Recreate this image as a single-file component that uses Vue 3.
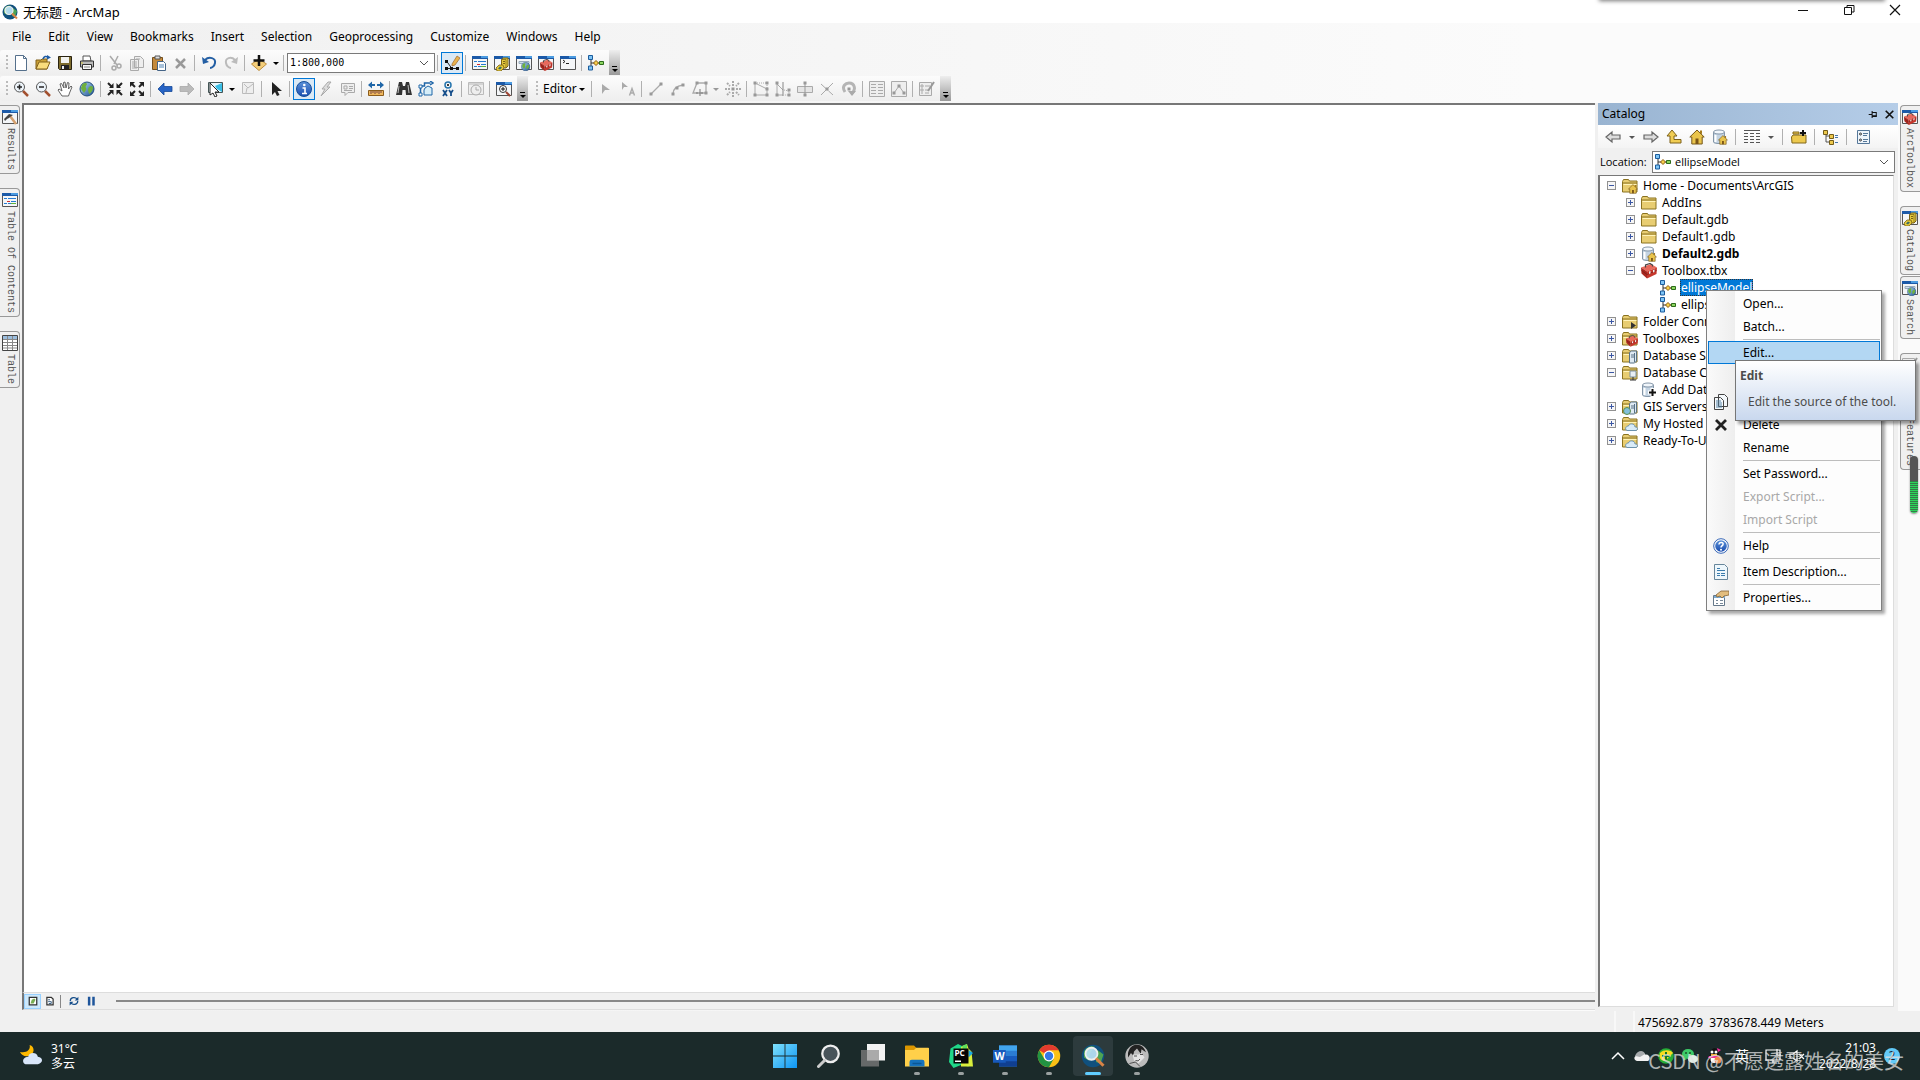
<script setup>
import { h, ref } from 'vue';

const win = '<path d="M.5 1.500h15v13H.5z" fill="#f4f6f8" stroke="#555"/><path d="M0 1h16v3H0z" fill="#1c5aa8"/><path d="M9 1h7v2H9z" fill="#4b9be0"/>';
const folder = '<path d="M.5 3.500l1-2h5l1 1.500h7.500v11H.5z" fill="#e8cd72" stroke="#8a7220"/><path d="M1 5h14" stroke="#8a7220"/><path d="M1.500 6.500h13" stroke="#fff3b8"/>';
const model = '<path d="M3 4v8M3 8h10" stroke="#333"/><path d="M.5.5h4v4h-4zM.5 11h4v4h-4z" fill="#7ec4f5" stroke="#1c5c9c"/><path d="M8 5.500l2.500 2.500L8 10.500 5.500 8z" fill="#f7cf4a" stroke="#8a5a10"/><path d="M11.500 6.500h4v3h-4z" fill="#8cd660" stroke="#2c6b1b"/>';
const toolbox = '<path d="M0 4.500L10 1l6 3.500-10 4z" fill="#e8695b"/><path d="M0 4.500l6 4v7l-5.500-5z" fill="#a8271f"/><path d="M6 8.500l10-4-.5 6.500L6 15.500z" fill="#c5362b"/><path d="M.5 7.500l5.500 4 9.500-4" fill="none" stroke="#7a1d16" stroke-width=".8"/><path d="M4.500 4.500V2L9 .5 11.500 2v1.500" fill="none" stroke="#444" stroke-width="1.200"/><path d="M8 8.500l1.500-.5v2.500L8 11zM12 7l1.500-.5V9l-1.500.5z" fill="#eee"/>';
const miniToolbox = '<g transform="translate(4 4) scale(.75)">' + toolbox + '</g>';
const house = '<path d="M8 1L.8 8h2v7h10.400V8h2z" fill="#e9c44c" stroke="#76581a"/><path d="M11 1.500h2v4l-2-2z" fill="#a57b1c"/><path d="M6.500 9.500h3V15h-3z" fill="#7a5517"/>';
const miniHouse = '<g transform="translate(6 6) scale(.62)">' + house + '</g>';
const db = '<path d="M1.500 3v10c0 2 11 2 11 0V3" fill="#c3d3e2" stroke="#8496a8"/><ellipse cx="7" cy="3" rx="5.500" ry="2" fill="#f1f6fb" stroke="#8496a8"/><path d="M3.500 6v7" stroke="#fff" stroke-width="2"/>';
const globe = '<circle cx="8" cy="8" r="7" fill="url(#sea)" stroke="#24507e"/><path d="M3 4c2-3 5-2 5-1S6 5 7 7s-1 3-2 5c-1-2-3-3-3-5zM10 6c2-2 4-1 4 1s-2 5-4 6c0-2-2-4 0-7z" fill="#6fb03d"/>';
const page = '<path d="M2.500.5h8l3 3v12h-11z" fill="#fff" stroke="#55708c"/><path d="M10.500.5v3h3" fill="none" stroke="#55708c"/>';
const lens = '<path d="M10 10l5 5" stroke="#a3502f" stroke-width="2.500"/><circle cx="6.500" cy="6" r="5" fill="#edf4fa" stroke="#555"/>';
const cloud = '<path d="M5 14.500h9c3-1 1-4-1-3.500 0-4-6-4-6.500-1-3 0-4 3.500-1.500 4.500z" fill="#d8ebf8" stroke="#6c93ae"/>';
const server = '<path d="M7.500 4.500l2-1.500h5v10l-2 2h-5z" fill="#dfeaf2" stroke="#587286"/><path d="M9 7h3M9 9h3M12.500 5v9" stroke="#587286"/>';
const caret = '<path d="M1 4h6L4 7z" fill="currentColor"/>';
const node = (x, y) => `<path d="M${x - 1.5} ${y - 1.5}h3v3h-3z" fill="#999"/>`;
const arcmap = '<circle cx="8" cy="8" r="7.500" fill="#10507e"/><path d="M2 5c2-4 6-4 7-3l-3 4-1 5-3-2zM11 4l4 3-2 6-3-1z" fill="#4da453"/><circle cx="7" cy="6.500" r="4" fill="#bfe4f8" fill-opacity=".9" stroke="#eee" stroke-width="1.200"/><path d="M10 9.500l5 5" stroke="#d98346" stroke-width="2"/>';

const icons = {
  win, folder, model, toolbox, house, globe, caret, arcmap,
  fresh: page,
  open: '<path d="M1 5h5l1-1h5v10H1z" fill="#c9a036" stroke="#80601a"/><path d="M1 14l3-7h11l-3 7z" fill="#f9dc7d" stroke="#80601a"/><path d="M8 4c1-3 3-3 5-2" fill="none" stroke="#1e5ca5" stroke-width="1.500"/><path d="M12 0l4 2.500-4 2z" fill="#1e5ca5"/>',
  save: '<path d="M1.500 1.500h13v13h-12l-1-1z" fill="#7d6b2c" stroke="#292210"/><path d="M4 2h8v6H4z" fill="#f2f2ee"/><path d="M4 10h8v4H4z" fill="#222"/><path d="M5 11h2v3H5z" fill="#eee"/>',
  print: '<path d="M4 1h7l1 5H4z" fill="#fff" stroke="#555"/><path d="M1.500 6h13v6h-13z" fill="#bbb" stroke="#333"/><path d="M3.500 9.500h9v5h-9z" fill="#f7f7f7" stroke="#333"/><path d="M5 12h6" stroke="#888"/><path d="M2 8h2" stroke="#d7c83a"/>',
  cut: '<g fill="none" stroke="#aaa" stroke-width="1.500"><path d="M3 1l7 9M11 1L7 9"/><circle cx="12" cy="11" r="2"/><circle cx="7" cy="13" r="2"/></g>',
  copyOff: '<path d="M5.500 1.500h6l3 3v8h-9zM1.500 4.500h8v11h-8z" fill="#eee" stroke="#aaa"/><path d="M3 7h5M3 9h5M3 11h5M3 13h5M7 4h4" stroke="#aaa"/>',
  copy: '<path d="M5.500.5h6l3 3v9h-9zM1.500 3.500h6l3 3v9h-9z" fill="#f4f8fb" stroke="#444"/><path d="M3 7h5M3 9h6M3 11h6M3 13h6" stroke="#5987ab"/>',
  paste: '<path d="M1.500 2.500h10v12h-10z" fill="#c58a3b" stroke="#75501d"/><path d="M4 1h5v3H4z" fill="#ddd" stroke="#555"/><path d="M6.500 6.500h6l2 2v7h-8z" fill="#fff" stroke="#446487"/><path d="M8 10h5M8 12h5" stroke="#4e83b5"/>',
  xOff: '<path d="M3 4l9 9M12 4l-9 9" stroke="#999" stroke-width="2.500"/>',
  x: '<path d="M3 3l10 10M13 3L3 13" stroke="#222" stroke-width="2.800"/>',
  undo: '<path d="M4 5c4-4 11-2 10 3-.5 3-3 5-5 5" fill="none" stroke="#245fa4" stroke-width="2"/><path d="M1 2l1 7 6-2z" fill="#245fa4"/>',
  redo: '<path d="M12 5C8 1 2 3 3 8c.5 3 3 5 5 5" fill="none" stroke="#bbb" stroke-width="2"/><path d="M15 2l-1 7-6-2z" fill="#bbb"/>',
  add: '<path d="M8 4l7.500 5L8 15.500.5 9z" fill="#f4ce7a" stroke="#bd8e3e"/><path d="M8 0v11M2.500 5.500h11" stroke="#111" stroke-width="2.500"/>',
  sketch: '<path d="M2.500 6l5 7M2 13.500h12" stroke="#222" fill="none"/><path d="M1 5h3v3H1zM1 12h3v3H1zM6 12h3v3H6zM12 12h3v3h-3z" fill="#111"/><path d="M8 9l5-8 3 2-5 7-3 1z" fill="#e9b34f" stroke="#9b6732" stroke-width=".7"/>',
  toc: win + '<path d="M2 6.500h3M2 11.500h3" stroke="#267bd1"/><path d="M6 6.500h8M6 11.500h3M9 9.500h5" stroke="#267bd1"/><path d="M5 9.500h3" stroke="#d32d2d"/><path d="M9 11.500h5" stroke="#5fb33b"/>',
  catalog: win + '<path d="M7.500 4.500l2-1.500h4.500v8l-2 2H7.500z" fill="#e4c93c" stroke="#796214"/><path d="M7.500 4.500h4.500V13" fill="none" stroke="#796214" stroke-width=".7"/><path d="M9 6.500h2M9 8.500h2" stroke="#796214"/><path d="M2 13l3-3h4l1 3-3 3H3z" fill="#e4c93c" stroke="#796214" stroke-width=".8"/><path d="M4 13.500l2-2 2 1-2 2z" fill="#3a6b62"/>',
  search: win + '<path d="M3 6.500h10v2H3z" fill="#cfe1ee" stroke="#9ab"/><g transform="translate(5 7) scale(.58)">' + globe + '</g>',
  tbox: win + '<g transform="translate(2 4) scale(.78)">' + toolbox + '</g>',
  python: win + '<path d="M3 5l2 1.500L3 8M6 8.500h3" fill="none" stroke="#222"/>',
  zoomIn: lens + '<path d="M4 6h5M6.500 3.500v5" stroke="#222" stroke-width="1.500"/>',
  zoomOut: lens + '<path d="M4 6h5" stroke="#222" stroke-width="1.500"/>',
  pan: '<path d="M5 15l-4-6 1-1 3 2-2-7 1.500-.5L7 7 6.500 1.500 8 1l1 6 1.500-5.500 1.500.5-.5 6L14 5l1 1-2.500 6-1 3z" fill="#fff" stroke="#555" stroke-width=".9"/>',
  fixedIn: '<path d="M1 2l4 4M15 2l-4 4M1 14l4-4M15 14l-4-4" stroke="#222" stroke-width="2"/><path d="M6.500 2v5H2zM9.500 2v5H14zM6.500 14V9H2zM9.500 14V9H14z" fill="#222"/>',
  fixedOut: '<path d="M3 3l3 3M13 3l-3 3M3 13l3-3M13 13l-3-3" stroke="#222" stroke-width="2"/><path d="M1 1h5L1 6zM15 1h-5l5 5zM1 15h5l-5-5zM15 15h-5l5-5z" fill="#222"/>',
  back: '<path d="M1 8l6-6v3.500h8v5H7V14z" fill="#2764c5" stroke="#174a98" stroke-width=".8"/>',
  forward: '<path d="M15 8L9 2v3.500H1v5h8V14z" fill="#bbb" stroke="#aaa" stroke-width=".8"/>',
  select: '<path d="M1.500 1.500h14v10h-14z" fill="#e8f7fc" stroke="#455"/><path d="M8 5l7-3v9l-5-3z" fill="#38bde5"/><path d="M3 2v12l3-2 2 4 2-1-2-4h4z" fill="#fff" stroke="#222"/>',
  clear: '<path d="M2.500 1.500h11v11h-11z" fill="#eee" stroke="#bbb"/><path d="M4 3l4 4 5-4M7 7l-1 5" fill="none" stroke="#bbb"/>',
  pointer: '<path d="M4 1v13l3-3 2 4 2.500-1-2-4H14z" fill="#222"/>',
  info: '<circle cx="8" cy="8" r="7.500" fill="url(#blue)" stroke="#174f9a"/><path d="M6.500 7H9v5M6 12.500h5" stroke="#fff" stroke-width="1.600" fill="none"/><circle cx="8.300" cy="4" r="1.300" fill="#fff"/>',
  bolt: '<path d="M10 1L4 8h3l-4 7 9-9H9l4-5z" fill="#ddd" stroke="#aaa"/>',
  popup: '<path d="M1.500 2.500h13v9H8l-3 3v-3H1.500z" fill="#eee" stroke="#aaa"/><path d="M4 5h3v3H4zM9 5.500h4M9 7.500h4M4 9.500h8" stroke="#aaa" fill="none"/>',
  measure: '<path d="M2 4h12" stroke="#1f66a8" stroke-width="2" stroke-dasharray="5 2"/><path d="M4 .5L0 4l4 3.500zM12 .5L16 4l-4 3.500z" fill="#1f66a8"/><path d="M.5 9.500h15v5H.5z" fill="#eeb75d" stroke="#8b5c1c"/><path d="M3 10v3M5 10v2M7 10v3M9 10v2M11 10v3M13 10v2" stroke="#744"/>',
  find: '<path d="M3 1h3l1 4h2l1-4h3l3 13h-6l-.5-5h-3L6 14H0z" fill="#333"/><path d="M3 5L2 12M12 4l1 8" stroke="#bbb"/>',
  route: '<path d="M2.500 14V5h4V2h6M12 0l3 2-3 2" fill="none" stroke="#1f66a8" stroke-width="1.500"/><path d="M7 7l3-2 4 2v7H6V9z" fill="#d6edf8" stroke="#1f66a8"/><path d="M1 12h3v3H1zM1 4h3v3H1z" fill="#fff" stroke="#1f66a8"/>',
  xy: '<circle cx="8" cy="4" r="3" fill="none" stroke="#2675ae" stroke-width="1.500"/><circle cx="8" cy="4" r="1"/><path d="M3 9l4 6M7 9l-4 6M9 9l2 3 2-3M11 12v3" fill="none" stroke="#174f8b" stroke-width="1.800"/>',
  time: '<path d="M.5 1.500h15v12H.5z" fill="#eee" stroke="#bbb"/><path d="M1 3h14" stroke="#bbb"/><circle cx="8" cy="9" r="5" fill="#eee" stroke="#aaa"/><path d="M8 6v3h3" stroke="#aaa" fill="none"/>',
  viewer: win + '<circle cx="7" cy="8" r="3.500" fill="#fff" stroke="#333"/><path d="M5 8h4M7 6v4" stroke="#111"/><path d="M10 11l4 4" stroke="#9c4331" stroke-width="2"/>',
  editArrow: '<path d="M4 3v10l3-4h5z" fill="#aaa"/>',
  editNote: '<path d="M2 1v8l2-3h4z" fill="#aaa"/><path d="M9.500 14.500l2.500-7 2.500 7M10.500 12h3" fill="none" stroke="#aaa" stroke-width="1.400"/>',
  line: '<path d="M3 13L13 3" stroke="#aaa" stroke-width="1.300"/>' + node(3, 13) + node(13, 3),
  arc: '<path d="M3 13c0-4 3-8 10-9" fill="none" stroke="#aaa" stroke-width="1.300"/>' + node(3, 13) + node(7, 7) + node(13, 4),
  poly: '<path d="M6 12H1l4-10h9v10H9" fill="none" stroke="#aaa" stroke-width="1.300"/><path d="M8 8v7M4 12h7" stroke="#777"/>' + node(5, 2) + node(14, 2) + node(14, 12),
  burst: '<path d="M8 0v5M8 11v5M0 8h5M11 8h5M2 2l3 3M11 11l3 3M14 2l-3 3M2 14l3-3" stroke="#aaa" stroke-width="2" stroke-dasharray="2 1"/>' + node(8, 8),
  vertex: '<path d="M2 2v12h12V8z" fill="none" stroke="#aaa"/><path d="M2 2h12v6" fill="none" stroke="#aaa" stroke-dasharray="1 1"/>' + node(2, 2) + node(2, 14) + node(14, 14) + node(14, 8) + node(14, 2),
  reshape: '<path d="M2 3v11h6M2 3l6 6" fill="none" stroke="#aaa"/><path d="M8 1v14" stroke="#888"/><path d="M9 9l5 1v4H9" fill="none" stroke="#aaa" stroke-dasharray="1 1"/>' + node(2, 2) + node(2, 14) + node(14, 9) + node(14, 14),
  cutPoly: '<path d="M.5 5.500h15v6H.5z" fill="#e5e5e5" stroke="#aaa"/><path d="M8 2v13" stroke="#999"/>' + node(8, 2) + node(8, 14),
  split: '<path d="M2 14L14 2M2 3l12 11" stroke="#aaa" stroke-dasharray="9 1"/>' + node(8, 8),
  rotate: '<path d="M4 11C0 5 5 2 8 2c6 0 7 7 3 10" fill="none" stroke="#b5b5b5" stroke-width="3"/><path d="M7 10h8l-4 5z" fill="#aaa"/>' + node(8, 8),
  attrs: '<path d="M.5.500h15v15H.5z" fill="#eee" stroke="#aaa"/><path d="M2 3.500h5M9 3.500h5M2 6.500h5M9 6.500h5M2 9.500h5M9 9.500h5M2 12.500h5M9 12.500h5" stroke="#aaa"/>',
  sketchProps: '<path d="M.5.500h15v15H.5z" fill="#eee" stroke="#aaa"/><path d="M3 12l5-7 5 7" fill="none" stroke="#aaa"/>' + node(3, 12) + node(8, 5) + node(13, 12),
  create: '<path d="M.5 1.500h12v13H.5z" fill="#eee" stroke="#aaa"/><path d="M2 4h2v2H2zM2 8h2v2H2zM2 12h2M6 5h5M6 9h4M6 12h4" fill="none" stroke="#aaa"/><path d="M9 10l6-9" stroke="#999" stroke-width="2"/>',
  hammer: win + '<path d="M8 7l6 8" stroke="#d4a06e" stroke-width="2.500"/><path d="M2 10l5-5 4 1-3 2-1 1-2 1-2 2z" fill="#444"/>',
  table: '<path d="M.5.500h15v15H.5z" fill="#fff" stroke="#444"/><path d="M1 1h14v3H1z" fill="#9bbddd"/><path d="M1 4.500h14M1 7.500h14M1 10.500h14M1 13h14M5.500 1v14M10.500 1v14" stroke="#888"/>',
  navBack: '<path d="M1 8l6-5v3h8v4H7v3z" fill="#ddd" stroke="#666" stroke-width="1.200"/>',
  navNext: '<path d="M15 8L9 3v3H1v4h8v3z" fill="#ddd" stroke="#666" stroke-width="1.200"/>',
  up: '<path d="M6 1L1 7h3v7h11v-3.500H8V7h3z" fill="#f1cd53" stroke="#7c611a"/>',
  dbHome: db + miniHouse,
  list: '<path d="M0 1.500h16M0 4.500h4M6 4.500h4M12 4.500h4M0 7.500h4M6 7.500h4M12 7.500h4M0 10.500h4M6 10.500h4M12 10.500h4M0 13.500h4M6 13.500h4M12 13.500h4" stroke="#555"/>',
  connect: '<path d="M.5 8l1.500-2h13v8H1z" fill="#edc94e" stroke="#80671a"/><path d="M2 3h6v2H2z" fill="#edc94e" stroke="#80671a"/><path d="M12 1v6M9 4h6" stroke="#111" stroke-width="2"/>',
  treeView: '<path d="M3 4v9h3M3 7h3" fill="none" stroke="#555"/><path d="M.5 1.500h4v4h-4zM6.500 5.500h4v4h-4zM6.500 11.500h4v4h-4z" fill="#ecc84c" stroke="#735c19"/><path d="M12 6.500h3M12 8.500h3M12 13.500h3" stroke="#4676aa"/>',
  options: '<path d="M2.500 1.500h12v13h-12z" fill="#eef5fb" stroke="#557799"/><circle cx="5.500" cy="5" r="1" fill="none" stroke="#333"/><circle cx="5.500" cy="11" r="1" fill="none" stroke="#333"/><path d="M8 4.500h5M8 6.500h4M8 10.500h5M8 12.500h4" stroke="#557799"/>',
  folderHome: folder + miniHouse,
  folderLink: folder + '<path d="M9 8v7l5-3.500z" fill="#333"/>',
  folderTools: folder + miniToolbox,
  folderServer: folder + server,
  folderDb: folder + '<path d="M8 6h6v6H8z" fill="#e8eff5" stroke="#7d909f"/><path d="M11 12v3M8 15h6" stroke="#333"/>',
  dbAdd: db + '<path d="M11.500 6v9M7 10.500h9" stroke="#fff" stroke-width="4"/><path d="M11.500 7v7M8 10.500h7" stroke="#111" stroke-width="2"/>',
  gis: folder + server + '<circle cx="5" cy="12" r="3.500" fill="#82bfda" stroke="#5c8d4a"/>',
  folderCloud: folder + cloud,
  help: '<circle cx="8" cy="8" r="7.300" fill="#fff" stroke="#3767b7"/><circle cx="8" cy="8" r="5.800" fill="url(#blue)"/><path d="M6 6.500c0-3 5-2.500 4 0C9.500 8 8 8 8 9.500" fill="none" stroke="#fff" stroke-width="1.500"/><circle cx="8" cy="11.700" r="1" fill="#fff"/>',
  desc: '<path d="M1.500.5h10l3 3v12h-13z" fill="#eef7fc" stroke="#67869b"/><path d="M4 4.500h3M4 6.500h8M4 9.500h3M8 9.500h4M4 11.500h3M8 11.500h4" stroke="#3b7cad"/>',
  props: '<path d="M.5 5.500h11v10H.5z" fill="#fff" stroke="#65788a"/><path d="M1 6h11v2H1z" fill="#7caad0"/><path d="M3 10.500h2M7 10.500h3M3 13.500h2M7 13.500h3" stroke="#789"/><path d="M3 5l5-4h8v4l-5 1-2 2-2-2-3 1z" fill="#e3bd7d" stroke="#856335" stroke-width=".8"/>',
  pin: '<path d="M1 8h5M6 3v10M6 5h6v6H6zM6 10h7" fill="none" stroke="#111" stroke-width="1.500"/>',
  close: '<path d="M2.500 2.500l11 11M13.500 2.500l-11 11" stroke="#111" stroke-width="2.400"/>',
  dataView: '<path d="M2 2h12v12H2z" fill="#fff" stroke="#333" stroke-width="2"/><path d="M4 12l2-6 4-2 2 2-3 6z" fill="#79af54"/>',
  layoutView: '<path d="M3 2h7l3 3v9H3z" fill="#fff" stroke="#333" stroke-width="2"/><path d="M5 6h3M5 9h5v3H6" stroke="#345b80" stroke-width="1.500" fill="none"/>',
  refresh: '<path d="M2 8c0-6 8-7 11-3M14 8c0 6-8 7-11 3" stroke="#174f8b" stroke-width="2" fill="none"/><path d="M15 1v6H9zM1 15V9h6z" fill="#174f8b"/>',
  pause: '<path d="M3 1h4v14H3zM10 1h4v14h-4z" fill="#1e559b"/>',
  start: '<path d="M0 0h7.700v7.700H0zM8.300 0H16v7.700H8.300zM0 8.300h7.700V16H0zM8.300 8.300H16V16H8.300z" fill="url(#start)"/>',
  lookup: '<circle cx="9" cy="6.500" r="5.500" fill="#48545a" stroke="#eee" stroke-width="1.500"/><path d="M5 11l-4 4" stroke="#ccc" stroke-width="2" stroke-linecap="round"/>',
  tasks: '<path d="M4 0h12v11H4z" fill="#f3f3f3"/><path d="M0 4h12v11H0z" fill="#777" fill-opacity=".82"/><path d="M4 4h8v7H4z" fill="#aaa"/>',
  explorer: '<path d="M0 1.500q0-.5.500-.5H6l2 2h5v5H0z" fill="#dc9600"/><path d="M0 4h6l1.500-1.500h8q.5 0 .5.500v12H0z" fill="#ffd04a"/><path d="M3 15v-3q0-1.500 1.500-1.500h7q1.500 0 1.500 1.500v3z" fill="#1673bd"/><path d="M5 13h6" stroke="#0b5794"/>',
  pycharm: '<path d="M1 3l5-3 4 2 2-2-1 5 3 2-1 8-5-1-5 2-3-4z" fill="#20d789"/><path d="M8 2l4-2 1 3 2 2 1 10-8 0z" fill="#d9ee3c"/><path d="M9 1l3-1v4H9z" fill="#5fe05a"/><path d="M13 4l3 2-3 3z" fill="#18a9e6"/><path d="M3 3h10v10H3z" fill="#060606"/><text x="3.600" y="8" font-size="5.500" font-weight="bold" font-family="Open Sans, sans-serif" fill="#fff">PC</text><path d="M4 11.500h4" stroke="#fff"/>',
  word: '<path d="M4 1h12v14H4z" fill="#2b7cd3"/><path d="M4 1h12v3.500H4z" fill="#41a5ee"/><path d="M4 8h12v4H4z" fill="#185abd"/><path d="M4 11.500h12V15H4z" fill="#103f91"/><path d="M0 4h8.500v8.500H0z" fill="#185abd"/><text x="1" y="10.800" font-size="7" font-weight="bold" font-family="Open Sans, sans-serif" fill="#fff">W</text>',
  chrome: '<circle cx="8" cy="8" r="7.500" fill="#fbc116"/><path d="M8 8L1.500 4.200A7.500 7.500 0 0 1 14.500 4.200H8z" fill="#e33b2e"/><path d="M8 8l-2.500 3L1.500 4.200A7.500 7.500 0 0 0 8 15.500l3-5.500z" fill="#229342"/><circle cx="8" cy="8" r="3.600" fill="#fff"/><circle cx="8" cy="8" r="2.800" fill="#3478e5"/>',
  avatar: '<circle cx="8" cy="8" r="7.800" fill="#bcbcbc"/><path d="M2 6C3 2 5 .5 8 .5s5 2 6 5l-3-2-.5 3L8 3 6 5l-.5 3L4 6 2 9z" fill="#222"/><path d="M5 7l1 4 3 2 4-4-2-3-2 1z" fill="#e4e4e4"/><path d="M6 8h2M10 7h2M7 11q2 1 3-1M3 13l4-1 3 3" fill="none" stroke="#444" stroke-width=".6"/>',
  weather: '<path d="M7 0c4 1 4 7-1 8-3 .5-5-1-6-3 4 1 8-1 7-5z" fill="#ffb900"/><path d="M4 14h9c4-1 4-5 0-5.500-1-4-7-3-7 0-4 0-5 4.500-2 5.500z" fill="#d9e6fa"/>',
  chevron: '<path d="M2 11l6-6 6 6" fill="none" stroke="#fff" stroke-width="1.500"/>',
  onedrive: '<path d="M3 13c-4-1-3-5 0-5.500 1-4 7-4 8-1 5-1 6 5 3 6.500z" fill="#f2f2f2"/><path d="M1 8c2-5 8-7 10-2L6 9z" fill="#a7abad"/>',
  guard: '<circle cx="8" cy="8" r="7.800" fill="#27ae36"/><path d="M2 5c4-4 11-3 13 0L7 13c-5 0-6-4-5-8z" fill="#f9dc20"/><path d="M8 4v8M4 8h8" stroke="#167725" stroke-width="2"/>',
  wechat: '<ellipse cx="6" cy="6" rx="6" ry="5" fill="#3ecb69"/><path d="M2 9l-1 4 4-2z" fill="#3ecb69"/><ellipse cx="11" cy="11" rx="5" ry="4" fill="#e3efe6"/><circle cx="4" cy="5" r=".8"/><circle cx="8" cy="5" r=".8"/>',
  qq: '<path d="M4 7c0-9 9-9 9 0l2 5-3 3H4l-3-3z" fill="#111"/><ellipse cx="8" cy="11" rx="3.500" ry="4" fill="#fff"/><circle cx="6" cy="4" r="1.500" fill="#fff"/><circle cx="10" cy="4" r="1.500" fill="#fff"/><path d="M5 6h6v2H5z" fill="#f1a728"/><path d="M3 8h10l1 2H2zM11 0l4 2-3 2z" fill="#ee2c9b"/><circle cx="12" cy="12" r="3.500" fill="#f08a4b"/>',
  display: '<path d="M1 2h14v10H1zM8 12v3M4 15h8M12 1v6h4" fill="none" stroke="#fff" stroke-width="1.200"/>',
  mute: '<path d="M1 6h3l4-3v10l-4-3H1zM10 6l5 5M15 6l-5 5" fill="none" stroke="#fff" stroke-width="1.200"/>',
  minimize: '<path d="M3 8.500h10" stroke="#111"/>',
  restore: '<path d="M3.500 5.500h7v7h-7zM6 5V3.500h7V10h-2" fill="none" stroke="#111"/>',
  quit: '<path d="M3 3l10 10M13 3L3 13" stroke="#111" stroke-width="1.200"/>',
  drop: '<path d="M4 6l4 4 4-4" fill="none" stroke="#555"/>',
};

const Icon = (props) => h('svg', {
  class: 'icon',
  viewBox: props.name === 'caret' ? '0 0 8 10' : '0 0 16 16',
  'aria-hidden': 'true',
  innerHTML: icons[props.name],
});
Icon.props = ['name'];

const scale = ref('1:800,000');
const location = ref('ellipseModel');

const menus = ['File', 'Edit', 'View', 'Bookmarks', 'Insert', 'Selection', 'Geoprocessing', 'Customize', 'Windows', 'Help'];

// "|" is a separator, "caret" a drop-down arrow
const fileTools = ['fresh', 'open', 'save', 'print', '|', 'cut', 'copyOff', 'paste', 'xOff', '|', 'undo', 'redo', '|', 'add', 'caret', '|'];
const windowTools = ['|', 'sketch', '|', 'toc', 'catalog', 'search', 'tbox', 'python', '|', 'model'];
const mapTools = ['zoomIn', 'zoomOut', 'pan', 'globe', '|', 'fixedIn', 'fixedOut', '|', 'back', 'forward', '|', 'select', 'caret', 'clear', '|', 'pointer', '|', 'info', 'bolt', 'popup', '|', 'measure', '|', 'find', 'route', 'xy', '|', 'time', '|', 'viewer'];
const editTools = ['|', 'editArrow', 'editNote', '|', 'line', 'arc', 'poly', 'caret', 'burst', '|', 'vertex', 'reshape', 'cutPoly', 'split', 'rotate', '|', 'attrs', 'sketchProps', '|', 'create'];
const catalogTools = ['navBack', 'caret', 'navNext', 'up', 'house', 'dbHome', '|', 'list', 'caret', '|', 'connect', '|', 'treeView', '|', 'options'];
const pressed = ['sketch', 'info'];

const leftTabs = [
  { icon: 'hammer', text: 'Results' },
  { icon: 'toc', text: 'Table Of Contents' },
  { icon: 'table', text: 'Table' },
];
const rightTabs = [
  { icon: 'tbox', text: 'ArcToolbox' },
  { icon: 'catalog', text: 'Catalog' },
  { icon: 'search', text: 'Search', joined: true },
  { icon: 'create', text: 'Create Features' },
];

const tree = [
  { level: 0, mark: '-', icon: 'folderHome', text: 'Home - Documents\\ArcGIS' },
  { level: 1, mark: '+', icon: 'folder', text: 'AddIns' },
  { level: 1, mark: '+', icon: 'folder', text: 'Default.gdb' },
  { level: 1, mark: '+', icon: 'folder', text: 'Default1.gdb' },
  { level: 1, mark: '+', icon: 'dbHome', text: 'Default2.gdb', bold: true },
  { level: 1, mark: '-', icon: 'toolbox', text: 'Toolbox.tbx' },
  { level: 2, icon: 'model', text: 'ellipseModel', selected: true },
  { level: 2, icon: 'model', text: 'ellipseModel1' },
  { level: 0, mark: '+', icon: 'folderLink', text: 'Folder Connections' },
  { level: 0, mark: '+', icon: 'folderTools', text: 'Toolboxes' },
  { level: 0, mark: '+', icon: 'folderServer', text: 'Database Servers' },
  { level: 0, mark: '-', icon: 'folderDb', text: 'Database Connections' },
  { level: 1, icon: 'dbAdd', text: 'Add Database Connection' },
  { level: 0, mark: '+', icon: 'gis', text: 'GIS Servers' },
  { level: 0, mark: '+', icon: 'folderCloud', text: 'My Hosted Services' },
  { level: 0, mark: '+', icon: 'folderCloud', text: 'Ready-To-Use Services' },
];

const contextMenu = [
  { text: 'Open...' },
  { text: 'Batch...' },
  { text: 'Edit...', line: true, active: true },
  { text: 'Debug...', line: true },
  { text: 'Copy', icon: 'copy' },
  { text: 'Delete', icon: 'x' },
  { text: 'Rename' },
  { text: 'Set Password...', line: true },
  { text: 'Export Script...', disabled: true },
  { text: 'Import Script', disabled: true },
  { text: 'Help', icon: 'help', line: true },
  { text: 'Item Description...', icon: 'desc', line: true },
  { text: 'Properties...', icon: 'props', line: true },
];

const apps = [
  { icon: 'start', text: 'Start' },
  { icon: 'lookup', text: 'Search' },
  { icon: 'tasks', text: 'Task view' },
  { icon: 'explorer', text: 'Explorer', running: true },
  { icon: 'pycharm', text: 'PyCharm', running: true },
  { icon: 'word', text: 'Word', running: true },
  { icon: 'chrome', text: 'Chrome', running: true },
  { icon: 'arcmap', text: 'ArcMap', running: true, active: true },
  { icon: 'avatar', text: 'Reader', running: true },
];
</script>

<template>
  <div class="desktop">
    <svg class="defs" aria-hidden="true">
      <defs>
        <linearGradient id="sea" x2="1" y2="1"><stop offset="0" stop-color="#b9def5"/><stop offset="1" stop-color="#1c4f94"/></linearGradient>
        <linearGradient id="blue" x2="0" y2="1"><stop offset="0" stop-color="#5c92d8"/><stop offset="1" stop-color="#1a4db0"/></linearGradient>
        <linearGradient id="start" x2="1" y2="1"><stop offset="0" stop-color="#7ee0fb"/><stop offset="1" stop-color="#0d95f5"/></linearGradient>
      </defs>
    </svg>

    <header class="titlebar">
      <Icon name="arcmap"/>
      <span class="title">无标题 - ArcMap</span>
      <div class="window-buttons">
        <button aria-label="Minimize"><Icon name="minimize"/></button>
        <button aria-label="Restore"><Icon name="restore"/></button>
        <button aria-label="Close"><Icon name="quit"/></button>
      </div>
      <div class="edge-shadow"></div>
    </header>

    <nav class="menubar">
      <button v-for="m in menus" :key="m">{{ m }}</button>
    </nav>

    <div class="toolbars">
      <div class="toolbar">
        <i class="grip"></i>
        <template v-for="(t, i) in fileTools" :key="i">
          <i v-if="t === '|'" class="sep"></i>
          <button v-else class="tool" :class="{ narrow: t === 'caret' }" :aria-label="t"><Icon :name="t"/></button>
        </template>
        <div class="combo scale">
          <select v-model="scale" aria-label="Map scale"><option>1:800,000</option></select>
          <Icon name="drop"/>
        </div>
        <template v-for="(t, i) in windowTools" :key="i">
          <i v-if="t === '|'" class="sep"></i>
          <button v-else class="tool" :class="{ pressed: pressed.includes(t) }" :aria-label="t"><Icon :name="t"/></button>
        </template>
        <button class="more" aria-label="Toolbar options"></button>
      </div>
      <div class="toolbar-row">
        <div class="toolbar">
          <i class="grip"></i>
          <template v-for="(t, i) in mapTools" :key="i">
            <i v-if="t === '|'" class="sep"></i>
            <button v-else class="tool" :class="{ narrow: t === 'caret', pressed: pressed.includes(t) }" :aria-label="t"><Icon :name="t"/></button>
          </template>
          <button class="more" aria-label="Toolbar options"></button>
        </div>
        <div class="toolbar editor">
          <i class="grip"></i>
          <button class="editor-menu">Editor<Icon name="caret"/></button>
          <template v-for="(t, i) in editTools" :key="i">
            <i v-if="t === '|'" class="sep"></i>
            <button v-else class="tool" :class="{ narrow: t === 'caret' }" :aria-label="t" disabled><Icon :name="t"/></button>
          </template>
          <button class="more" aria-label="Toolbar options"></button>
        </div>
      </div>
    </div>

    <div class="workspace">
      <aside class="dock left">
        <button v-for="t in leftTabs" :key="t.text" class="dock-tab"><Icon :name="t.icon"/><span>{{ t.text }}</span></button>
      </aside>

      <main class="map">
        <div class="canvas"></div>
        <div class="map-bar">
          <button class="view-button current" aria-label="Data view"><Icon name="dataView"/></button>
          <button class="view-button" aria-label="Layout view"><Icon name="layoutView"/></button>
          <i class="sep"></i>
          <button class="view-button" aria-label="Refresh"><Icon name="refresh"/></button>
          <button class="view-button" aria-label="Pause drawing"><Icon name="pause"/></button>
          <div class="scroll-line"></div>
        </div>
      </main>

      <section class="catalog">
        <div class="catalog-title">
          <span>Catalog</span>
          <button aria-label="Auto hide"><Icon name="pin"/></button>
          <button aria-label="Close"><Icon name="close"/></button>
        </div>
        <div class="catalog-tools">
          <template v-for="(t, i) in catalogTools" :key="i">
            <i v-if="t === '|'" class="sep"></i>
            <button v-else class="tool" :class="{ narrow: t === 'caret' }" :aria-label="t"><Icon :name="t"/></button>
          </template>
        </div>
        <div class="location">
          <label for="location">Location:</label>
          <div class="combo">
            <Icon name="model"/>
            <select id="location" v-model="location"><option>ellipseModel</option></select>
            <Icon name="drop"/>
          </div>
        </div>
        <ul class="tree">
          <li v-for="n in tree" :key="n.text" :class="['level' + n.level, { bold: n.bold }]">
            <button v-if="n.mark" class="mark" :class="{ plus: n.mark === '+' }" aria-label="Toggle"></button>
            <i v-else class="mark-space"></i>
            <Icon :name="n.icon"/>
            <span :class="{ selected: n.selected }">{{ n.text }}</span>
          </li>
        </ul>

        <div class="context-menu">
          <button v-for="c in contextMenu" :key="c.text" :class="{ line: c.line, active: c.active }" :disabled="c.disabled">
            <span class="slot"><Icon v-if="c.icon" :name="c.icon"/></span>
            <span class="item-text">{{ c.text }}</span>
          </button>
        </div>
        <div class="tooltip" role="tooltip">
          <strong>Edit</strong>
          <p>Edit the source of the tool.</p>
        </div>
      </section>

      <aside class="dock right">
        <button v-for="t in rightTabs" :key="t.text" class="dock-tab" :class="{ joined: t.joined }"><Icon :name="t.icon"/><span>{{ t.text }}</span></button>
        <div class="meter"></div>
      </aside>
    </div>

    <footer class="status">
      <span class="cell wide"></span>
      <span class="cell"></span>
      <span class="coords">475692.879&nbsp; 3783678.449 Meters</span>
    </footer>

    <div class="taskbar">
      <button class="weather"><Icon name="weather"/><span>31°C<br>多云</span></button>
      <div class="apps">
        <button v-for="a in apps" :key="a.text" class="app" :class="{ running: a.running, active: a.active }" :aria-label="a.text"><Icon :name="a.icon"/></button>
      </div>
      <div class="tray">
        <Icon name="chevron"/>
        <Icon name="onedrive"/>
        <Icon name="guard"/>
        <Icon name="wechat"/>
        <Icon name="qq"/>
        <span class="ime">英</span>
        <Icon name="display"/>
        <Icon name="mute"/>
        <time>21:03<br>2022/8/28</time>
        <span class="badge">2</span>
      </div>
      <div class="watermark">CSDN @不愿透露姓名的美女</div>
    </div>
  </div>
</template>

<style>
html,
body {
  margin: 0;
  overflow: hidden;
}
</style>

<style scoped>
.desktop {
  display: flex;
  flex-direction: column;
  height: 100vh;
  background: linear-gradient(90deg, #f0f0f0, #fbfbfb 80%);
  color: #000;
  font: 12px/16px "Noto Sans", "Noto Sans CJK SC", sans-serif;
}

.defs {
  position: absolute;
  width: 0;
  height: 0;
}

button,
select {
  margin: 0;
  padding: 0;
  border: 0;
  background: none;
  color: inherit;
  font: inherit;
}

.icon {
  flex: none;
  width: 16px;
  height: 16px;
}

.titlebar {
  position: relative;
  display: flex;
  flex: none;
  align-items: center;
  gap: 5px;
  height: 23px;
  padding-left: 2px;
  background: #fff;
}

.title {
  font-size: 13px;
}

.window-buttons {
  display: flex;
  margin-left: auto;
  padding-right: 2px;
}

.window-buttons button {
  width: 46px;
  height: 20px;
}

.edge-shadow {
  position: absolute;
  top: -6px;
  right: 36px;
  width: 284px;
  height: 6px;
  box-shadow: 0 0 4px 1px #777;
}

.menubar {
  display: flex;
  flex: none;
  gap: 17px;
  height: 27px;
  padding-left: 12px;
}

.toolbars {
  display: flex;
  flex: none;
  flex-direction: column;
  align-items: flex-start;
  gap: 1px;
  padding-bottom: 2px;
}

.toolbar-row {
  display: flex;
}

.toolbar {
  display: flex;
  align-items: center;
  height: 25px;
  background: linear-gradient(#fcfcfc, #eee);
  border-radius: 3px;
}

.editor {
  padding-left: 2px;
}

.grip {
  flex: none;
  width: 2px;
  height: 16px;
  margin: 0 2px 0 6px;
  background: repeating-linear-gradient(#bbb 0 2px, transparent 2px 4px);
}

.sep {
  flex: none;
  width: 1px;
  height: 16px;
  margin: 0 3px 0 2px;
  background: #b0b0b0;
}

.tool {
  display: flex;
  flex: none;
  align-items: center;
  justify-content: center;
  box-sizing: border-box;
  width: 22px;
  height: 22px;
}

.tool.narrow {
  width: 11px;
}

.narrow .icon {
  width: 8px;
  height: 10px;
}

.tool:disabled {
  color: #999;
}

.pressed {
  border: 1px solid #0078d7;
  background: #dbe9f5;
}

.more {
  position: relative;
  align-self: stretch;
  width: 11px;
  margin-left: 2px;
  background: linear-gradient(#eee, #999);
}

.more::before {
  content: "";
  position: absolute;
  left: 3px;
  bottom: 8px;
  width: 5px;
  height: 1px;
  background: #000;
}

.more::after {
  content: "";
  position: absolute;
  left: 3px;
  bottom: 3px;
  border: 3px solid transparent;
  border-top-color: #000;
  border-bottom: 0;
}

.combo {
  display: flex;
  align-items: center;
  box-sizing: border-box;
  height: 20px;
  padding: 0 2px;
  border: 1px solid #7a7a7a;
  background: #fff;
}

.combo select {
  flex: 1;
  min-width: 0;
  appearance: none;
  outline: 0;
}

.scale {
  width: 148px;
  font: 10px/16px "DejaVu Sans Mono", monospace;
}

.editor-menu {
  display: flex;
  align-items: center;
  gap: 1px;
  margin: 0 3px;
}

.editor-menu .icon {
  width: 8px;
  height: 10px;
}

.workspace {
  display: flex;
  flex: 1;
  min-height: 0;
}

.dock {
  position: relative;
  display: flex;
  flex: none;
  flex-direction: column;
  gap: 14px;
  width: 22px;
  padding-top: 2px;
  background: #f0f0f0;
}

.dock-tab {
  display: flex;
  flex-direction: column;
  align-items: center;
  gap: 3px;
  box-sizing: border-box;
  width: 20px;
  padding: 3px 1px;
  border: 1px solid #999;
  background: #f0f0f0;
}

.dock-tab span {
  color: #555;
  font: 10px/14px "Liberation Mono", monospace;
  writing-mode: vertical-rl;
}

.left .dock-tab {
  border-left: 0;
  border-radius: 0 4px 4px 0;
}

.right {
  align-items: flex-end;
  background: #fafafa;
}

.right .dock-tab {
  align-items: flex-start;
  border-right: 0;
  border-radius: 4px 0 0 4px;
}

.dock-tab.joined {
  margin-top: -13px;
}

.meter {
  position: absolute;
  top: 353px;
  right: 2px;
  width: 8px;
  height: 57px;
  border-radius: 4px;
  background: linear-gradient(#555 25px, transparent 25px), repeating-linear-gradient(#2bd45a 0 1px, #36784a 1px 2px);
  box-shadow: 0 1px 2px #888;
}

.map {
  display: flex;
  flex: 1;
  flex-direction: column;
  min-width: 0;
  padding-bottom: 1px;
}

.canvas {
  flex: 1;
  border-top: 2px solid #777;
  border-bottom: 1px solid #ddd;
  border-left: 2px solid #777;
  background: #fff;
}

.map-bar {
  display: flex;
  flex: none;
  align-items: center;
  height: 16px;
  border-bottom: 1px solid #ddd;
  border-left: 2px solid #777;
  background: #f0f0f0;
}

.view-button {
  display: flex;
  align-items: center;
  justify-content: center;
  width: 17px;
  height: 15px;
}

.view-button .icon {
  width: 10px;
  height: 10px;
}

.view-button.current {
  background: #cde8fb;
  box-shadow: inset 0 0 0 1px #99d1ff;
}

.map-bar .sep {
  height: 13px;
  margin: 0 4px 0 2px;
  background: #888;
}

.scroll-line {
  flex: 1;
  height: 2px;
  margin-left: 17px;
  background: #888;
}

.catalog {
  position: relative;
  display: flex;
  flex: none;
  flex-direction: column;
  width: 300px;
  padding: 0 0 4px 3px;
  background: #f0f0f0;
}

.catalog-title {
  display: flex;
  flex: none;
  align-items: center;
  height: 22px;
  padding: 0 1px 0 4px;
  background: linear-gradient(90deg, #99b4d1, #b5cde8);
}

.catalog-title span {
  flex: 1;
}

.catalog-title button {
  display: flex;
  align-items: center;
  justify-content: center;
  width: 16px;
  height: 16px;
}

.catalog-title .icon {
  width: 11px;
  height: 11px;
}

.catalog-tools {
  display: flex;
  flex: none;
  align-items: center;
  height: 23px;
  padding-left: 3px;
  background: linear-gradient(#fff, #f4f4f4);
  color: #555;
}

.catalog-tools .tool {
  width: 23px;
}

.catalog-tools .tool.narrow {
  width: 15px;
}

.catalog-tools .sep {
  margin: 0 4px;
}

.location {
  display: flex;
  flex: none;
  align-items: center;
  height: 27px;
  padding: 0 3px 0 2px;
  font: 11px/16px "Open Sans", sans-serif;
}

.location label {
  width: 52px;
}

.location .combo {
  flex: 1;
  height: 22px;
  gap: 4px;
}

.tree {
  flex: 1;
  min-height: 0;
  margin: 0 4px 0 0;
  padding: 1px 0 0 7px;
  border: 1px solid #ddd;
  border-top: 1px solid #777;
  border-left: 2px solid #777;
  background: #fff;
  list-style: none;
  overflow: hidden;
  white-space: nowrap;
}

.tree li {
  display: flex;
  align-items: center;
  height: 17px;
}

.tree .icon {
  margin: 0 4px 0 6px;
}

.tree span {
  padding: 0 1px;
  line-height: 17px;
}

.level1 {
  padding-left: 19px;
}

.level2 {
  padding-left: 38px;
}

.bold {
  font-weight: bold;
}

.tree .selected {
  background: #0078d7;
  color: #fff;
  outline: 1px dotted #333;
  outline-offset: -1px;
}

.mark-space {
  width: 9px;
}

.mark {
  box-sizing: border-box;
  width: 9px;
  height: 9px;
  border: 1px solid #919191;
  background: linear-gradient(#3b57a4, #3b57a4) center / 5px 1px no-repeat, #f6f6f6;
}

.mark.plus {
  background: linear-gradient(#3b57a4, #3b57a4) center / 5px 1px no-repeat, linear-gradient(#3b57a4, #3b57a4) center / 1px 5px no-repeat, #f6f6f6;
}

.context-menu {
  position: absolute;
  top: 187px;
  left: 111px;
  z-index: 2;
  display: flex;
  flex-direction: column;
  box-sizing: border-box;
  width: 176px;
  padding: 1px;
  border: 1px solid #808080;
  background: linear-gradient(90deg, #fafafa, #eee 28px, #fdfdfd 28px);
  box-shadow: 3px 3px 3px rgba(0, 0, 0, 0.35);
}

.context-menu button {
  position: relative;
  display: flex;
  align-items: center;
  box-sizing: border-box;
  height: 23px;
  text-align: left;
}

.context-menu button.line {
  margin-top: 3px;
}

.context-menu .line::before {
  content: "";
  position: absolute;
  top: -2px;
  right: 0;
  left: 35px;
  height: 1px;
  background: #bdbdbd;
}

.context-menu .active {
  background: #b3d7f3;
  box-shadow: inset 0 0 0 1px #0078d7;
}

.context-menu button:disabled {
  color: #a8a8a8;
}

.slot {
  display: flex;
  width: 30px;
  padding-left: 5px;
}

.tooltip {
  position: absolute;
  top: 257px;
  left: 140px;
  z-index: 3;
  box-sizing: border-box;
  width: 181px;
  height: 61px;
  padding: 7px 0 0 4px;
  border: 1px solid #767676;
  background: linear-gradient(#fff, #c9d8ee);
  box-shadow: 3px 3px 3px rgba(0, 0, 0, 0.4);
  color: #4c4c4c;
  white-space: nowrap;
}

.tooltip strong {
  display: block;
}

.tooltip p {
  margin: 10px 0 0 8px;
}

.status {
  display: flex;
  flex: none;
  align-items: stretch;
  height: 21px;
  background: #f0f0f0;
}

.cell {
  width: 17px;
  border-right: 2px solid #f8f8f8;
}

.cell.wide {
  flex: 1;
}

.coords {
  box-sizing: border-box;
  width: 285px;
  padding: 4px 0 0 3px;
}

.taskbar {
  position: relative;
  display: flex;
  flex: none;
  align-items: center;
  justify-content: space-between;
  height: 48px;
  background: #1b2a2a;
  color: #fff;
}

.weather {
  display: flex;
  align-items: center;
  gap: 9px;
  width: 300px;
  padding-left: 20px;
  font-size: 12px;
  line-height: 15px;
  text-align: left;
}

.weather .icon {
  width: 22px;
  height: 22px;
}

.apps {
  position: absolute;
  right: 0;
  left: 0;
  display: flex;
  justify-content: center;
  gap: 4px;
  padding-left: 2px;
  pointer-events: none;
}

.app {
  position: relative;
  display: flex;
  align-items: center;
  justify-content: center;
  width: 40px;
  height: 40px;
  border-radius: 4px;
  pointer-events: auto;
}

.app .icon {
  width: 24px;
  height: 24px;
}

.app.active {
  background: #2d3b3d;
}

.app.running::after {
  content: "";
  position: absolute;
  bottom: 1px;
  width: 6px;
  height: 3px;
  border-radius: 2px;
  background: #9aa0a0;
}

.app.active::after {
  width: 16px;
  background: #60cdff;
}

.tray {
  display: flex;
  align-items: center;
  gap: 8px;
  padding-right: 20px;
}

.ime {
  margin: 0 8px 0 5px;
  font-size: 14px;
}

.tray time {
  width: 63px;
  text-align: right;
}

.badge {
  width: 16px;
  height: 16px;
  border-radius: 8px;
  background: #62c9f8;
  color: #123;
  text-align: center;
}

.watermark {
  position: absolute;
  right: 16px;
  bottom: 4px;
  color: rgba(225, 225, 225, 0.75);
  font: 20px/30px "Noto Sans CJK SC", sans-serif;
  white-space: nowrap;
}
</style>
